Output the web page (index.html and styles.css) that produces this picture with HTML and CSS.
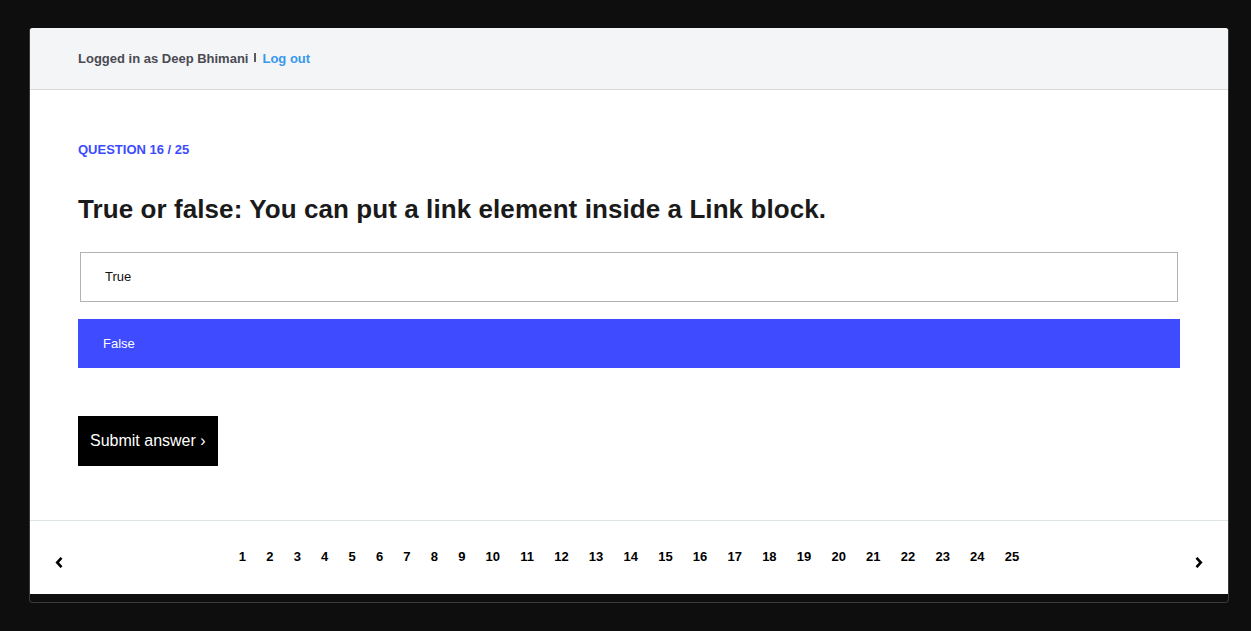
FILE: index.html
```html
<!DOCTYPE html>
<html lang="en">
<head>
<meta charset="utf-8">
<title>Quiz</title>
<link rel="stylesheet" href="styles.css">
</head>
<body>
<div class="frame">
  <div class="page">
    <header class="topbar">
      <span class="user">Logged in as Deep Bhimani</span>
      <span class="sep"></span>
      <a class="logout" href="#">Log out</a>
    </header>
    <main class="main">
      <div class="qlabel">QUESTION 16 / 25</div>
      <h1 class="question">True or false: You can put a link element inside a Link block.</h1>
      <div class="options">
        <div class="option option-plain">True</div>
        <div class="option option-selected">False</div>
      </div>
      <a class="submit" href="#">Submit answer ›</a>
    </main>
    <footer class="pager">
      <a class="arrow" href="#"><svg width="8" height="11" viewBox="0 0 8 11"><path d="M6.5 0.8 L2.2 5.5 L6.5 10.2" fill="none" stroke="#000" stroke-width="2.6"/></svg></a>
      <nav class="pages">
        <a href="#">1</a><a href="#">2</a><a href="#">3</a><a href="#">4</a><a href="#">5</a><a href="#">6</a><a href="#">7</a><a href="#">8</a><a href="#">9</a><a href="#">10</a><a href="#">11</a><a href="#">12</a><a href="#">13</a><a href="#">14</a><a href="#">15</a><a href="#">16</a><a href="#">17</a><a href="#">18</a><a href="#">19</a><a href="#">20</a><a href="#">21</a><a href="#">22</a><a href="#">23</a><a href="#">24</a><a href="#">25</a>
      </nav>
      <a class="arrow" href="#"><svg width="8" height="11" viewBox="0 0 8 11"><path d="M1.5 0.8 L5.8 5.5 L1.5 10.2" fill="none" stroke="#000" stroke-width="2.6"/></svg></a>
    </footer>
  </div>
</div>
</body>
</html>
```
FILE: styles.css
```css
html, body {
  margin: 0;
  padding: 0;
  background: #0e0e0e;
  font-family: "Liberation Sans", Arial, Helvetica, sans-serif;
}
.frame {
  margin: 27px 0 0 29px;
  width: 1198px;
  height: 574px;
  border: 1px solid #3a3a3a;
  border-top-color: #0e0e0e;
  border-radius: 4px;
  overflow: hidden;
  background: #0e0e0e;
}
.page {
  background: #fff;
  height: 566px;
  display: flex;
  flex-direction: column;
}
.topbar {
  height: 61px;
  background: #f4f5f7;
  border-bottom: 1px solid #d9d9dc;
  display: flex;
  align-items: center;
  padding: 0 48px;
  font-size: 13px;
  font-weight: 700;
  line-height: 16px;
}
.user {
  color: #4a4a52;
}
.sep {
  display: inline-block;
  width: 2px;
  height: 9px;
  background: #5a5a60;
  margin: -3px 6px 0 6px;
}
.logout {
  color: #3898ec;
  text-decoration: none;
}
.main {
  padding: 52px 48px 0 48px;
  flex: 1;
}
.qlabel {
  color: #3d4bff;
  font-size: 13px;
  font-weight: 700;
  line-height: 16px;
}
.question {
  margin: 35px 0 0 0;
  font-size: 26px;
  line-height: 32px;
  font-weight: 700;
  letter-spacing: 0.08px;
  color: #1a1a1a;
}
.options {
  margin-top: 27px;
  display: flex;
  flex-direction: column;
  gap: 17px;
}
.option {
  font-size: 13px;
  line-height: 16px;
  display: flex;
  align-items: center;
  box-sizing: border-box;
}
.option-plain {
  margin: 0 2px;
  height: 50px;
  border: 1px solid #b3b3b3;
  padding-left: 24px;
  color: #111;
}
.option-selected {
  height: 49px;
  background: #3e4bff;
  color: #fff;
  padding-left: 25px;
}
.submit {
  display: inline-block;
  margin-top: 48px;
  background: #000;
  color: #fff;
  font-size: 16px;
  line-height: 26px;
  padding: 12px 12px;
  text-decoration: none;
}
.pager {
  height: 73px;
  border-top: 1px solid #dde4e4;
  display: flex;
  align-items: flex-start;
  padding: 0 25px;
}
.arrow {
  display: block;
  width: 8px;
  height: 11px;
  margin-top: 36px;
}
.arrow svg {
  display: block;
}
.pages {
  flex: 1;
  display: flex;
  justify-content: center;
  margin-top: 28px;
}
.pages a {
  padding: 0 10.1px;
  font-size: 13px;
  font-weight: 700;
  line-height: 16px;
  color: #000;
  text-decoration: none;
}
```
